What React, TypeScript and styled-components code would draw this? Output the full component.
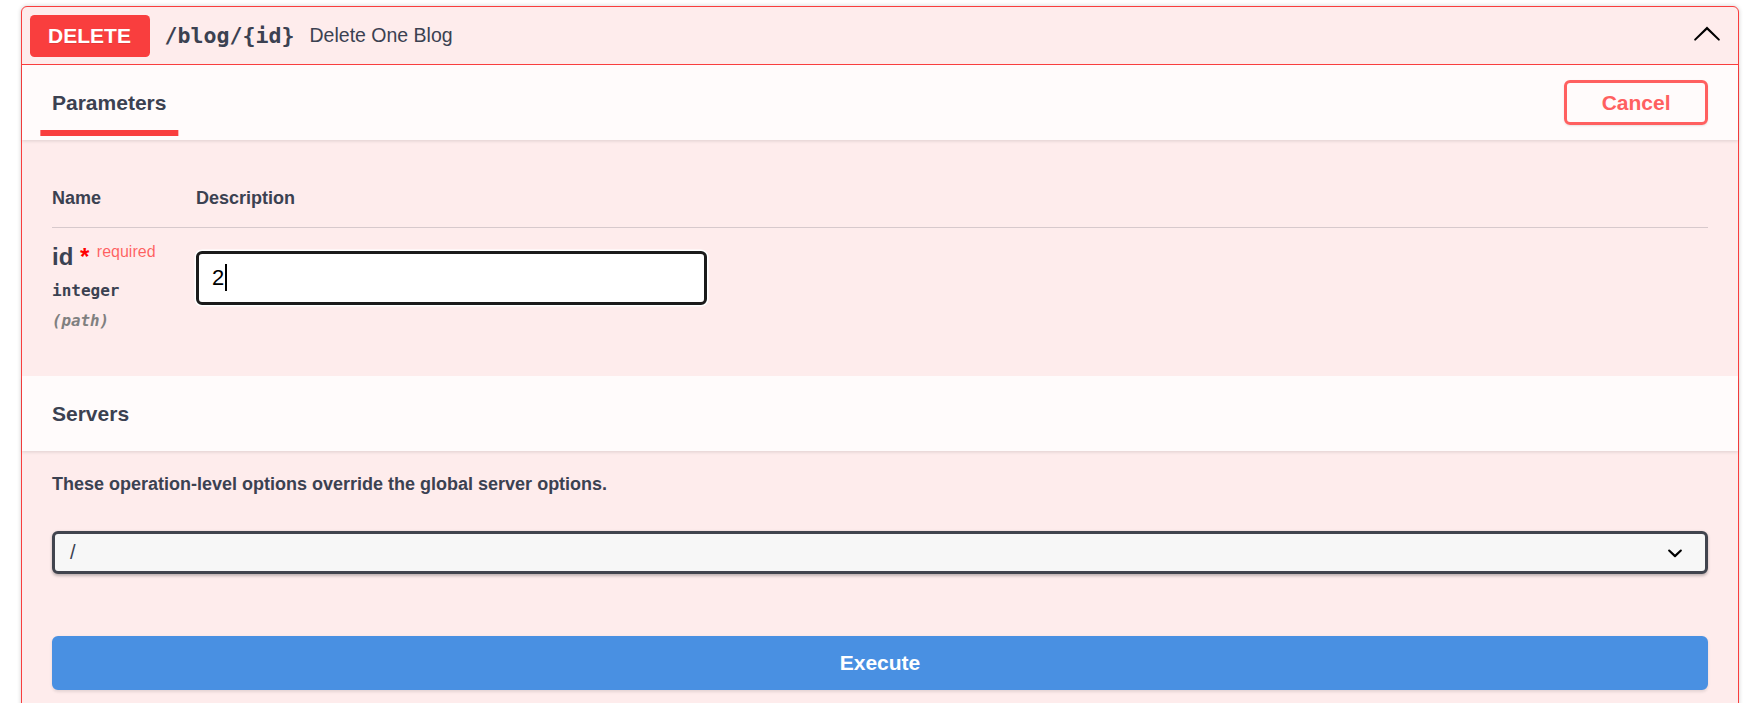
import React from "react";
import styled, { createGlobalStyle } from "styled-components";

const GlobalStyle = createGlobalStyle`
  html, body {
    margin: 0;
    padding: 0;
    background: #ffffff;
    overflow: hidden;
  }
  body {
    font-family: "Liberation Sans", Arial, sans-serif;
    color: #3b4151;
  }
  * { box-sizing: border-box; }
`;

const Page = styled.div`
  padding: 6px 14px 0 21px;
`;

const Block = styled.div`
  background: #feecec;
  border: 1px solid #f93e3e;
  border-radius: 6px;
  box-shadow: 0 0 4.5px rgba(0, 0, 0, 0.19);
`;

const Summary = styled.div`
  display: flex;
  align-items: center;
  padding: 7.5px;
  border-bottom: 1px solid #f93e3e;
`;

const Method = styled.span`
  min-width: 120px;
  padding: 9px 0;
  border-radius: 4.5px;
  background: #f93e3e;
  color: #ffffff;
  font-size: 21px;
  line-height: 24px;
  font-weight: 700;
  text-align: center;
  text-shadow: 0 1px 0 rgba(0, 0, 0, 0.1);
`;

const Path = styled.span`
  padding: 0 15px;
  font-family: "DejaVu Sans Mono", Consolas, monospace;
  font-size: 21.6px;
  font-weight: 700;
  color: #3b4151;
`;

const SummaryDesc = styled.span`
  flex: 1;
  font-size: 19.5px;
  color: #3b4151;
`;

const Toggle = styled.span`
  display: flex;
  padding-right: 8.5px;
  margin-bottom: 6px;
`;

const SectionHeader = styled.div`
  display: flex;
  align-items: center;
  justify-content: space-between;
  min-height: 75px;
  padding: 12px 30px;
  background: rgba(255, 255, 255, 0.8);
  box-shadow: 0 1.5px 3px rgba(0, 0, 0, 0.1);
`;

const Tab = styled.div`
  display: flex;
`;

const TabLabel = styled.span<{ $active?: boolean }>`
  position: relative;
  font-size: 21px;
  line-height: 24px;
  font-weight: 700;
  color: #3b4151;

  &::after {
    content: "";
    display: ${(p) => (p.$active ? "block" : "none")};
    position: absolute;
    left: 50%;
    bottom: -21px;
    width: 120%;
    height: 6px;
    transform: translateX(-50%);
    background: #f93e3e;
  }
`;

const SectionTitle = styled.h4`
  margin: 0;
  font-size: 21px;
  line-height: 24px;
  font-weight: 700;
  color: #3b4151;
`;

const CancelButton = styled.button`
  padding: 7.5px 34.5px;
  border: 3px solid #ff6060;
  border-radius: 6px;
  background: transparent;
  color: #ff6060;
  font-family: "Liberation Sans", Arial, sans-serif;
  font-size: 21px;
  line-height: 24px;
  font-weight: 700;
  box-shadow: 0 1px 2px rgba(0, 0, 0, 0.1);
`;

const ParamsWrapper = styled.div`
  padding: 30px;
`;

const ParamTable = styled.div`
  display: grid;
  grid-template-columns: 144px 1fr;
`;

const HeadCell = styled.div`
  padding: 18px 0;
  border-bottom: 1px solid rgba(59, 65, 81, 0.2);
  font-size: 18px;
  line-height: 21px;
  font-weight: 700;
  color: #3b4151;
`;

const NameCell = styled.div`
  padding: 15px 15px 15px 0;
`;

const ParamName = styled.div`
  font-size: 24px;
  line-height: 28px;
  font-weight: 700;
  color: #3b4151;
  white-space: nowrap;
`;

const Star = styled.span`
  color: red;
`;

const Required = styled.span`
  position: relative;
  top: -9px;
  padding: 7.5px;
  font-size: 16px;
  font-weight: 400;
  color: rgba(255, 0, 0, 0.6);
`;

const ParamType = styled.div`
  padding: 6px 0 7px;
  font-family: "DejaVu Sans Mono", Consolas, monospace;
  font-size: 16px;
  line-height: 21px;
  font-weight: 700;
  color: #3b4151;
`;

const ParamIn = styled.div`
  padding-top: 2px;
  font-family: "DejaVu Sans Mono", Consolas, monospace;
  font-size: 15.8px;
  line-height: 21px;
  font-style: italic;
  font-weight: 700;
  color: gray;
`;

const DescCell = styled.div`
  padding: 15px 0;
`;

const FakeInput = styled.div`
  display: flex;
  align-items: center;
  width: 511px;
  height: 54px;
  margin: 7.5px 0;
  padding: 0 13px;
  border: 3px solid #1b1b1b;
  border-radius: 6px;
  background: #ffffff;
  box-shadow: 0 0 0 1.5px #ffffff;
  font-size: 22px;
  color: #000000;
`;

const Caret = styled.span`
  display: inline-block;
  width: 1.5px;
  height: 27px;
  margin-left: 1px;
  background: #000000;
`;

const ServersBody = styled.div`
  padding: 0 30px 32px;
`;

const Message = styled.h4`
  margin: 23px 0 36px;
  font-size: 18px;
  line-height: 21px;
  font-weight: 700;
  color: #3b4151;
`;

const Select = styled.div`
  display: flex;
  align-items: center;
  justify-content: space-between;
  height: 43px;
  padding: 0 15px;
  border: 3px solid #41444e;
  border-radius: 6px;
  background: #f7f7f7;
  box-shadow: 0 1.5px 3px rgba(0, 0, 0, 0.25);
  font-size: 20px;
  color: #3b4151;
`;

const ExecuteWrapper = styled.div`
  padding: 30px;
`;

const ExecuteButton = styled.button`
  display: block;
  width: 100%;
  height: 54px;
  padding: 12px 60px;
  border: 3px solid #4990e2;
  border-radius: 6px;
  background: #4990e2;
  color: #ffffff;
  font-family: "Liberation Sans", Arial, sans-serif;
  font-size: 21px;
  line-height: 24px;
  font-weight: 700;
  box-shadow: 0 1.5px 3px rgba(0, 0, 0, 0.1);
`;

const ArrowUp = () => (
  <svg width="30" height="30" viewBox="0 0 20 20" aria-hidden="true">
    <path
      fill="#000"
      d="M17.418 14.908c.272.268.709.268.979 0s.271-.701 0-.969l-7.908-7.83c-.27-.268-.707-.268-.979 0l-7.908 7.830c-.27.268-.27.701 0 .969.271.268.709.268.979 0L10 7.767l7.418 7.141z"
    />
  </svg>
);

const ChevronDown = () => (
  <svg width="30" height="30" viewBox="0 0 20 20" aria-hidden="true">
    <path
      fill="#000"
      d="M13.418 7.859a.695.695 0 01.978 0 .68.68 0 010 .969l-3.908 3.83a.697.697 0 01-.979 0l-3.908-3.830a.68.68 0 010-.969.695.695 0 01.978 0L10 11l3.418-3.141z"
    />
  </svg>
);

export default function App() {
  return (
    <>
      <GlobalStyle />
      <Page>
        <Block>
          <Summary>
            <Method>DELETE</Method>
            <Path>/blog/{"{id}"}</Path>
            <SummaryDesc>Delete One Blog</SummaryDesc>
            <Toggle>
              <ArrowUp />
            </Toggle>
          </Summary>

          <SectionHeader>
            <Tab>
              <TabLabel $active>Parameters</TabLabel>
            </Tab>
            <CancelButton>Cancel</CancelButton>
          </SectionHeader>

          <ParamsWrapper>
            <ParamTable>
              <HeadCell>Name</HeadCell>
              <HeadCell>Description</HeadCell>
              <NameCell>
                <ParamName>
                  id{"\u00a0"}
                  <Star>*</Star>
                  <Required>required</Required>
                </ParamName>
                <ParamType>integer</ParamType>
                <ParamIn>(path)</ParamIn>
              </NameCell>
              <DescCell>
                <FakeInput role="textbox">
                  2
                  <Caret />
                </FakeInput>
              </DescCell>
            </ParamTable>
          </ParamsWrapper>

          <SectionHeader>
            <SectionTitle>Servers</SectionTitle>
          </SectionHeader>

          <ServersBody>
            <Message>These operation-level options override the global server options.</Message>
            <Select>
              <span>/</span>
              <ChevronDown />
            </Select>
          </ServersBody>

          <ExecuteWrapper>
            <ExecuteButton>Execute</ExecuteButton>
          </ExecuteWrapper>
        </Block>
      </Page>
    </>
  );
}
